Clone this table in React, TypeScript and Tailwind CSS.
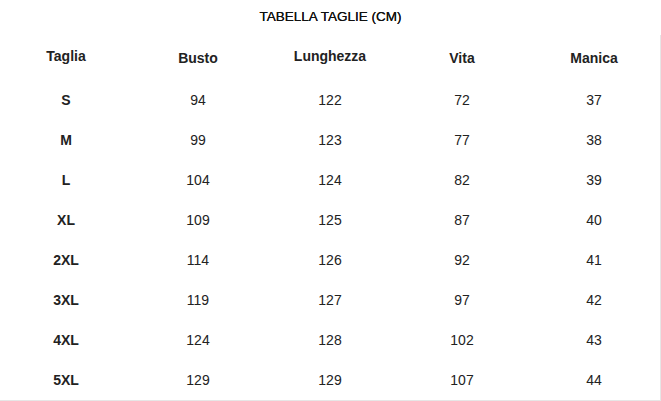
import React from "react";

const rows: [string, number, number, number, number][] = [
  ["S", 94, 122, 72, 37],
  ["M", 99, 123, 77, 38],
  ["L", 104, 124, 82, 39],
  ["XL", 109, 125, 87, 40],
  ["2XL", 114, 126, 92, 41],
  ["3XL", 119, 127, 97, 42],
  ["4XL", 124, 128, 102, 43],
  ["5XL", 129, 129, 107, 44],
];

export default function App() {
  return (
    <div
      className="w-[661px] h-[401px] bg-white text-[#222] overflow-hidden"
      style={{ fontFamily: '"Liberation Sans", Arial, sans-serif' }}
    >
      <div className="h-[35px] pt-[9px] text-center text-[13.5px] leading-[15px] text-[#111] [text-shadow:0_0_0.4px_#111]">
        TABELLA TAGLIE (CM)
      </div>
      <div className="w-[661px] border-r border-b border-[#e6e6e6]">
        <div className="grid grid-cols-[repeat(5,132px)] h-[45px] pt-[1px] items-center text-center text-[14px] font-bold leading-[16px]">
          <div className="mb-[4px]">Taglia</div>
          <div>Busto</div>
          <div className="mb-[4px]">Lunghezza</div>
          <div>Vita</div>
          <div>Manica</div>
        </div>
        {rows.map((r) => (
          <div
            key={r[0]}
            className="grid grid-cols-[repeat(5,132px)] h-[40px] items-center text-center text-[14px] leading-[16px]"
          >
            <div className="font-bold">{r[0]}</div>
            <div>{r[1]}</div>
            <div>{r[2]}</div>
            <div>{r[3]}</div>
            <div>{r[4]}</div>
          </div>
        ))}
      </div>
    </div>
  );
}
